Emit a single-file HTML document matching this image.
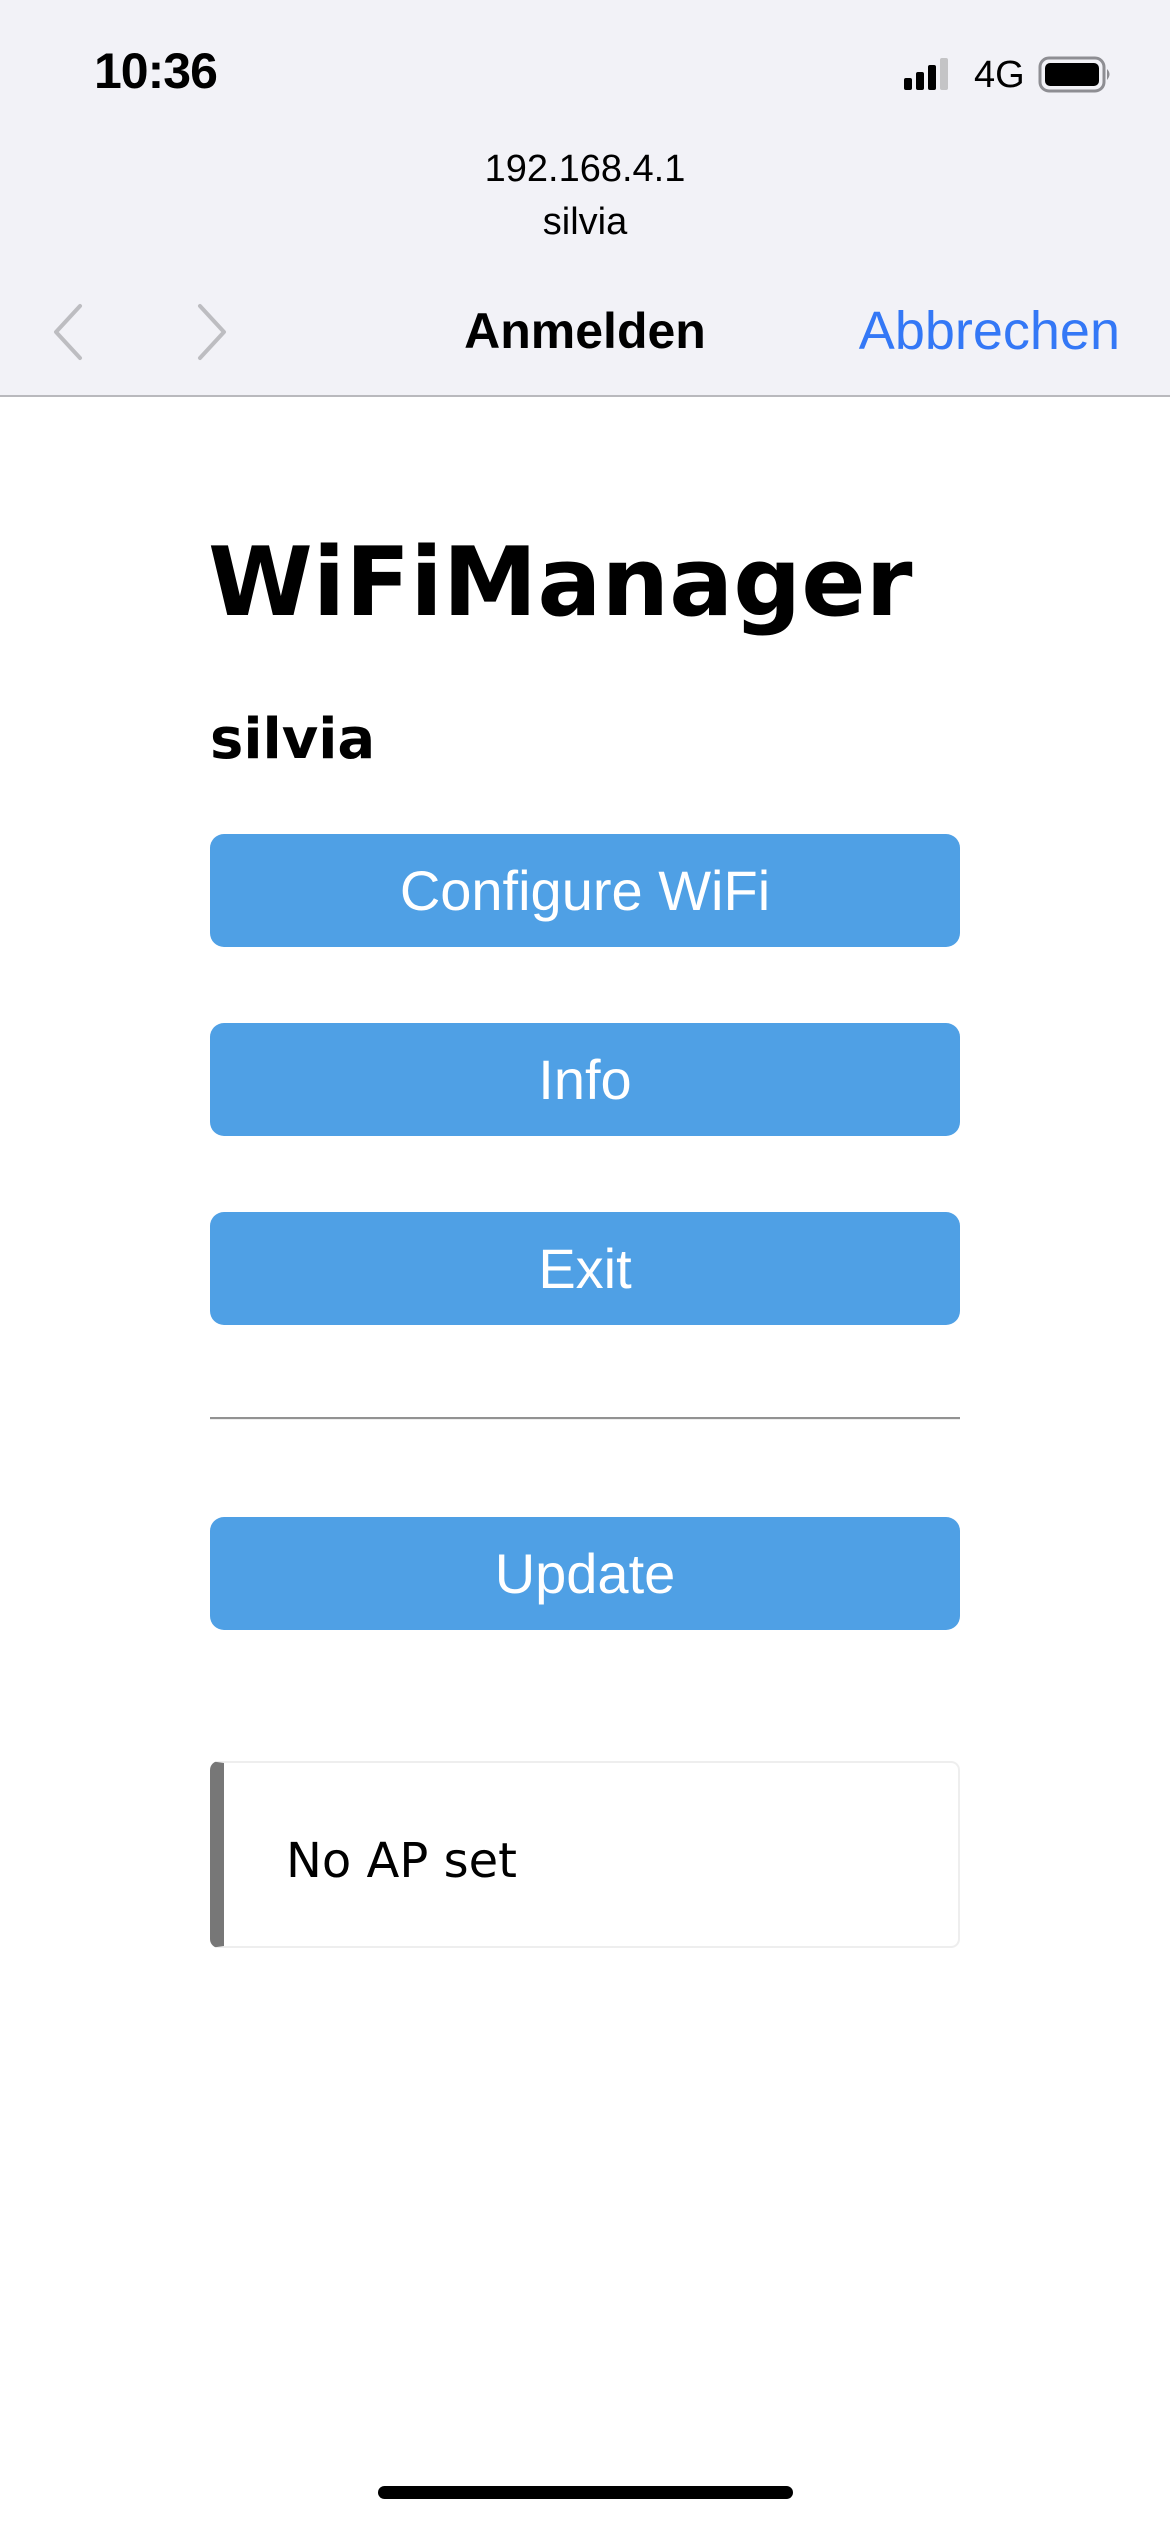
<!DOCTYPE html>
<html><head><meta charset="utf-8"><style>
*{margin:0;padding:0;box-sizing:border-box}
body{width:1170px;height:2532px;background:#fff;position:relative;overflow:hidden;font-family:"Liberation Sans",sans-serif}
.top{position:absolute;left:0;top:0;width:1170px;height:397px;background:#f2f2f7;border-bottom:2px solid #b9b9bd}
.abs{position:absolute;white-space:nowrap}
.btn{position:absolute;left:210px;width:750px;height:113px;background:#4fa0e5;border-radius:14px;color:#fff;font-size:56px;text-align:center;line-height:113px}
</style></head><body>
<div class="top">
 <div class="abs" style="left:94px;top:42px;font-size:50px;font-weight:bold;letter-spacing:-1px">10:36</div>
 <svg class="abs" style="left:904px;top:58px" width="56" height="34">
  <rect x="0" y="20" width="8" height="12" rx="2" fill="#000"/>
  <rect x="12" y="14" width="8" height="18" rx="2" fill="#000"/>
  <rect x="24" y="7" width="8" height="25" rx="2" fill="#000"/>
  <rect x="36" y="0" width="8" height="32" rx="2" fill="#c4c4c6"/>
 </svg>
 <div class="abs" style="left:974px;top:54px;font-size:38px">4G</div>
 <svg class="abs" style="left:1038px;top:56px" width="76" height="38">
  <rect x="2" y="2" width="64" height="33" rx="9" fill="none" stroke="#8e8e93" stroke-width="3"/>
  <rect x="7" y="7" width="54" height="23" rx="5" fill="#000"/>
  <path d="M69 13 q5 5 0 11" fill="#8e8e93"/>
 </svg>
 <div class="abs" style="left:0;width:1170px;text-align:center;top:148px;font-size:38px">192.168.4.1</div>
 <div class="abs" style="left:0;width:1170px;text-align:center;top:201px;font-size:38px">silvia</div>
 <svg class="abs" style="left:40px;top:300px" width="200" height="64">
  <path d="M40 6 L16 32 L40 58" fill="none" stroke="#bdbdc1" stroke-width="4" stroke-linecap="round" stroke-linejoin="round"/>
  <path d="M160 6 L184 32 L160 58" fill="none" stroke="#bdbdc1" stroke-width="4" stroke-linecap="round" stroke-linejoin="round"/>
 </svg>
 <div class="abs" style="left:0;width:1170px;text-align:center;top:302px;font-size:50px;font-weight:bold">Anmelden</div>
 <div class="abs" style="right:50px;top:300px;font-size:54px;color:#3478f6">Abbrechen</div>
</div>
<div class="abs" style="left:208px;top:523px;font-family:'DejaVu Sans',sans-serif;font-weight:bold;font-size:95px;line-height:120px">WiFiManager</div>
<div class="abs" style="left:210px;top:700px;font-family:'DejaVu Sans',sans-serif;font-weight:bold;font-size:56px;line-height:80px">silvia</div>
<div class="btn" style="top:834px">Configure WiFi</div>
<div class="btn" style="top:1023px">Info</div>
<div class="btn" style="top:1212px">Exit</div>
<div class="abs" style="left:210px;top:1417px;width:750px;height:3px;background:#929292;border-bottom:1px solid #eee"></div>
<div class="btn" style="top:1517px">Update</div>
<div class="abs" style="left:210px;top:1761px;width:750px;height:187px;border:2px solid #eee;border-left:14px solid #777;border-radius:9px"></div>
<div class="abs" style="left:286px;top:1831px;font-family:'DejaVu Sans',sans-serif;font-size:48px;line-height:60px">No AP set</div>
<div class="abs" style="left:378px;top:2486px;width:415px;height:13px;background:#000;border-radius:7px"></div>
</body></html>
